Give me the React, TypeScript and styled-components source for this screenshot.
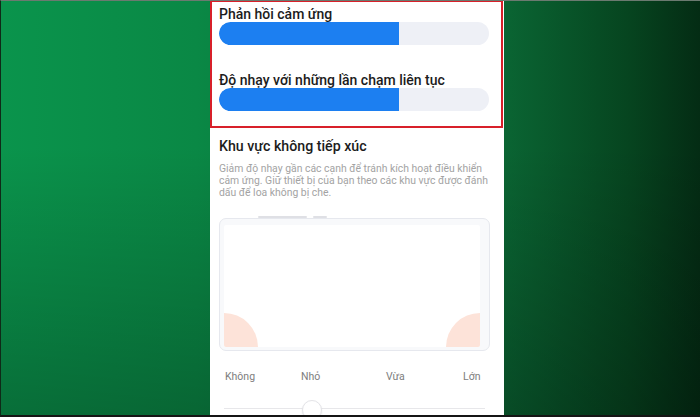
import React from "react";
import styled, {createGlobalStyle} from "styled-components";

const GlobalStyle = createGlobalStyle`
    html, body {
        margin: 0;
        padding: 0;
        background: #111;
    }
    * {
        box-sizing: border-box;
    }
`;

const Screen = styled.div`
    width: 700px;
    height: 417px;
    display: flex;
    padding-left: 209px;
    border-top: 1px solid #6b7a70;
    border-left: 1px solid #0f2a18;
    border-bottom: 2px solid #151515;
    background:
        linear-gradient(to bottom, rgba(0, 0, 0, 0) 35%, rgba(0, 0, 0, 0.25) 100%),
        linear-gradient(to right, #0a944c 0%, #0a8845 28%, #0a7039 50%, #0a6533 72%, #06441f 90%, #042c14 100%);
    font-family: Roboto, "Noto Sans", sans-serif;
    overflow: hidden;
`;

const Phone = styled.div`
    width: 294px;
    height: 100%;
    background: #fff;
    display: flex;
    flex-direction: column;
    overflow: hidden;
`;

const Highlight = styled.section`
    border: 2px solid #d8202a;
    margin-right: 1px;
    margin-top: -1px;
    padding: 4px 12px 15px 7px;
`;

const Label = styled.div<{$gap?: number}>`
    font-size: 14px;
    font-weight: 500;
    line-height: 17px;
    color: #1c1c1c;
    margin-top: ${(p) => p.$gap ?? 0}px;
    margin-bottom: -1px;
    white-space: nowrap;
`;

const Track = styled.div`
    height: 23px;
    border-radius: 12px;
    background: #eef0f6;
    overflow: hidden;
`;

const Fill = styled.div`
    height: 100%;
    background: #1c7ff1;
    border-radius: 12px 0 0 12px;
`;

const Section = styled.section`
    padding: 0 14px 0 9px;
    display: flex;
    flex-direction: column;
`;

const Title = styled.h2`
    margin: 10px 0 0;
    font-size: 14.2px;
    font-weight: 500;
    line-height: 17px;
    color: #1c1c1c;
`;

const Description = styled.p`
    margin: 8px 0 0;
    font-size: 10.4px;
    line-height: 11.8px;
    color: #a3a3a3;
`;

const Buttons = styled.div`
    display: flex;
    gap: 6px;
    height: 2px;
    margin-top: 18px;
    padding-left: 39px;
`;

const SideButton = styled.div<{$width: number}>`
    width: ${(p) => p.$width}px;
    height: 2px;
    border-radius: 1px;
    background: #dfe0e5;
`;

const Frame = styled.div`
    height: 133px;
    border: 1.5px solid #e6e8ee;
    border-radius: 7px;
    background: #f8f9fb;
    padding: 5.5px 9.5px 3.5px 3.5px;
    display: flex;
`;

const Display = styled.div`
    flex: 1;
    background: #fff;
    border-radius: 2px;
    display: flex;
    justify-content: space-between;
    align-items: flex-end;
    overflow: hidden;
`;

const Corner = styled.div<{$side: "left" | "right"}>`
    width: 34px;
    height: 34px;
    background: #fde3d9;
    border-top-${(p) => (p.$side === "left" ? "right" : "left")}-radius: 34px;
`;

const Levels = styled.div`
    display: grid;
    grid-template-columns: 76px 85px 77px auto;
    margin-top: 20px;
    padding-left: 6px;
`;

const Level = styled.span`
    font-size: 10.5px;
    line-height: 12px;
    color: #7d7d7d;
`;

const Slider = styled.div`
    position: relative;
    height: 20px;
    margin: 15px 5px 0;
    display: flex;
    align-items: center;
`;

const Rail = styled.div`
    flex: 1;
    height: 1.5px;
    background: #e7e7ea;
`;

const Thumb = styled.div`
    position: absolute;
    top: 2px;
    width: 20px;
    height: 20px;
    border-radius: 50%;
    background: #fff;
    border: 1px solid #e4e4e8;
    box-shadow: 0 1px 2px rgba(0, 0, 0, 0.08);
`;

const sensitivity = [
    {label: "Phản hồi cảm ứng", value: 0.665},
    {label: "Độ nhạy với những lần chạm liên tục", value: 0.665},
];

const levels = ["Không", "Nhỏ", "Vừa", "Lớn"];

export default function App() {
    return (
        <>
            <GlobalStyle />
            <Screen>
                <Phone>
                    <Highlight>
                        {sensitivity.map((item, i) => (
                            <div key={item.label}>
                                <Label $gap={i === 0 ? 0 : 27}>{item.label}</Label>
                                <Track>
                                    <Fill style={{width: `${item.value * 100}%`}} />
                                </Track>
                            </div>
                        ))}
                    </Highlight>
                    <Section>
                        <Title>Khu vực không tiếp xúc</Title>
                        <Description>
                            Giảm độ nhạy gần các cạnh để tránh kích hoạt điều khiển cảm ứng. Giữ thiết bị của
                            bạn theo các khu vực được đánh dấu để loa không bị che.
                        </Description>
                        <Buttons>
                            <SideButton $width={49} />
                            <SideButton $width={14} />
                        </Buttons>
                        <Frame>
                            <Display>
                                <Corner $side="left" />
                                <Corner $side="right" />
                            </Display>
                        </Frame>
                        <Levels>
                            {levels.map((l) => (
                                <Level key={l}>{l}</Level>
                            ))}
                        </Levels>
                        <Slider>
                            <Rail />
                            <Thumb style={{left: 78}} />
                        </Slider>
                    </Section>
                </Phone>
            </Screen>
        </>
    );
}
